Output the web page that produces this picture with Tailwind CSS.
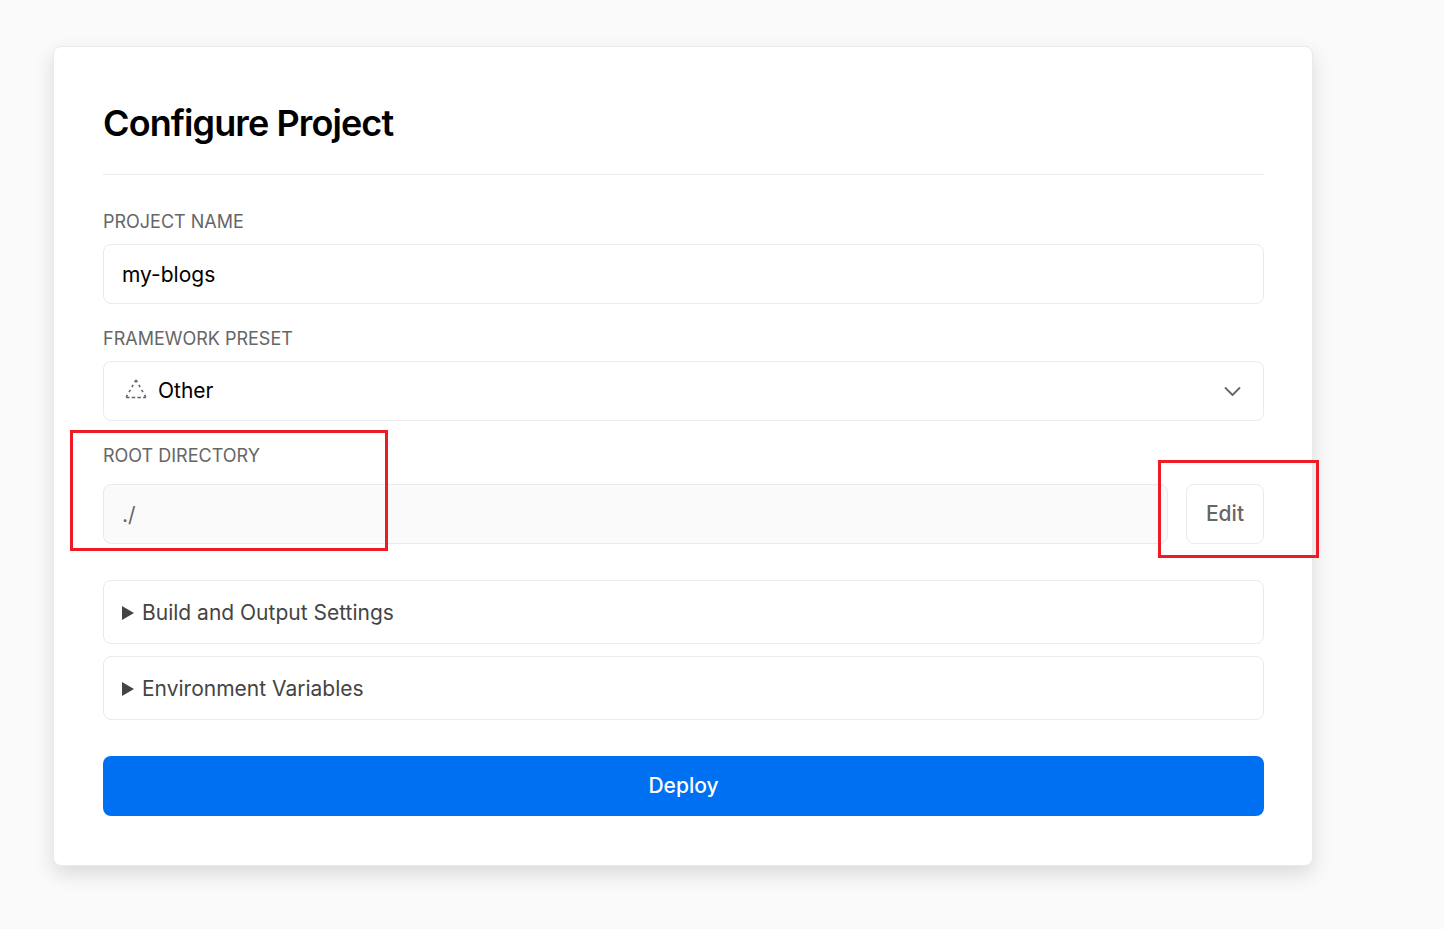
<!DOCTYPE html>
<html lang="en">
<head>
<meta charset="utf-8">
<meta name="viewport" content="width=device-width, initial-scale=1">
<title>Configure Project</title>
<script src="https://cdn.jsdelivr.net/npm/@tailwindcss/browser@4"></script>
</head>
<body class="min-h-screen bg-[#fafafa] font-['Inter',sans-serif] text-black">
<main class="pt-[46px] pr-[131px] pb-16 pl-[53px]">
  <section class="rounded-lg border border-[#eaeaea] bg-white pt-12 pr-12 pb-[49px] pl-[49px] shadow-[0_8px_20px_rgba(0,0,0,0.13)]">
    <h1 class="border-b border-[#eaeaea] pb-[23px] text-4xl leading-14 font-semibold tracking-tight">Configure Project</h1>
    <form class="mt-[35px] flex flex-col">
      <label for="name" class="text-[18px] leading-6 text-[#666]">PROJECT NAME</label>
      <input id="name" type="text" value="my-blogs" class="mt-[10px] h-15 w-full rounded-lg border border-[#eaeaea] bg-white px-[18px] text-[21px] outline-none">

      <label for="preset" class="mt-[23px] text-[18px] leading-6 text-[#666]">FRAMEWORK PRESET</label>
      <div class="mt-[10px] grid items-center">
        <select id="preset" class="col-start-1 row-start-1 h-15 w-full appearance-none rounded-lg border border-[#eaeaea] bg-white pr-15 pl-[54px] text-[21px] outline-none">
          <option>Other</option>
        </select>
        <svg class="pointer-events-none col-start-1 row-start-1 ml-[22px] -mt-1 h-5 w-[22px]" viewBox="0 0 22 20" fill="none" stroke="#666" stroke-width="1.6" aria-hidden="true">
          <path d="M11 1L1 18.5M11 1L21 18.5" stroke-dasharray="2.6 3.1" />
          <path d="M1 18.5H21" stroke-dasharray="3.5 2.2" />
        </svg>
        <svg class="pointer-events-none col-start-1 row-start-1 mr-[22px] h-[18px] w-[18px] justify-self-end" viewBox="0 0 18 18" fill="none" stroke="#666" stroke-width="1.8" stroke-linecap="round" stroke-linejoin="round" aria-hidden="true">
          <path d="M1.5 6L8.5 13L15.5 6" />
        </svg>
      </div>

      <div class="relative mt-[23px] flex flex-col">
        <label for="root" class="text-[18px] leading-6 text-[#666]">ROOT DIRECTORY</label>
        <div class="mt-4 flex gap-[18px]">
          <input id="root" type="text" value="./" readonly class="h-15 min-w-0 flex-1 rounded-lg border border-[#eaeaea] bg-[#fafafa] px-[18px] text-[21px] text-[#666] outline-none">
          <button type="button" class="h-15 w-[78px] rounded-lg border border-[#eaeaea] bg-white text-[21px] font-medium text-[#666]">Edit</button>
        </div>
        <span class="pointer-events-none absolute -top-[14px] -left-[33px] h-[121px] w-[318px] border-3 border-[#ed1c24]"></span>
        <span class="pointer-events-none absolute top-4 -right-[55px] h-[98px] w-[161px] border-3 border-[#ed1c24]"></span>
      </div>

      <div class="mt-9 flex flex-col gap-3 text-[21px] text-[#444]">
        <details class="rounded-lg border border-[#eaeaea]">
          <summary class="flex h-[62px] cursor-pointer items-center gap-2 px-[18px] pt-0.5">
            <svg class="h-[14px] w-3" viewBox="0 0 12 14" fill="#444" aria-hidden="true"><path d="M0 0L12 7L0 14Z" /></svg>
            Build and Output Settings
          </summary>
        </details>
        <details class="rounded-lg border border-[#eaeaea]">
          <summary class="flex h-[62px] cursor-pointer items-center gap-2 px-[18px] pt-0.5">
            <svg class="h-[14px] w-3" viewBox="0 0 12 14" fill="#444" aria-hidden="true"><path d="M0 0L12 7L0 14Z" /></svg>
            Environment Variables
          </summary>
        </details>
      </div>

      <button type="submit" class="mt-9 h-15 rounded-lg bg-[#0070f3] text-[21px] font-medium text-white">Deploy</button>
    </form>
  </section>
</main>
</body>
</html>
